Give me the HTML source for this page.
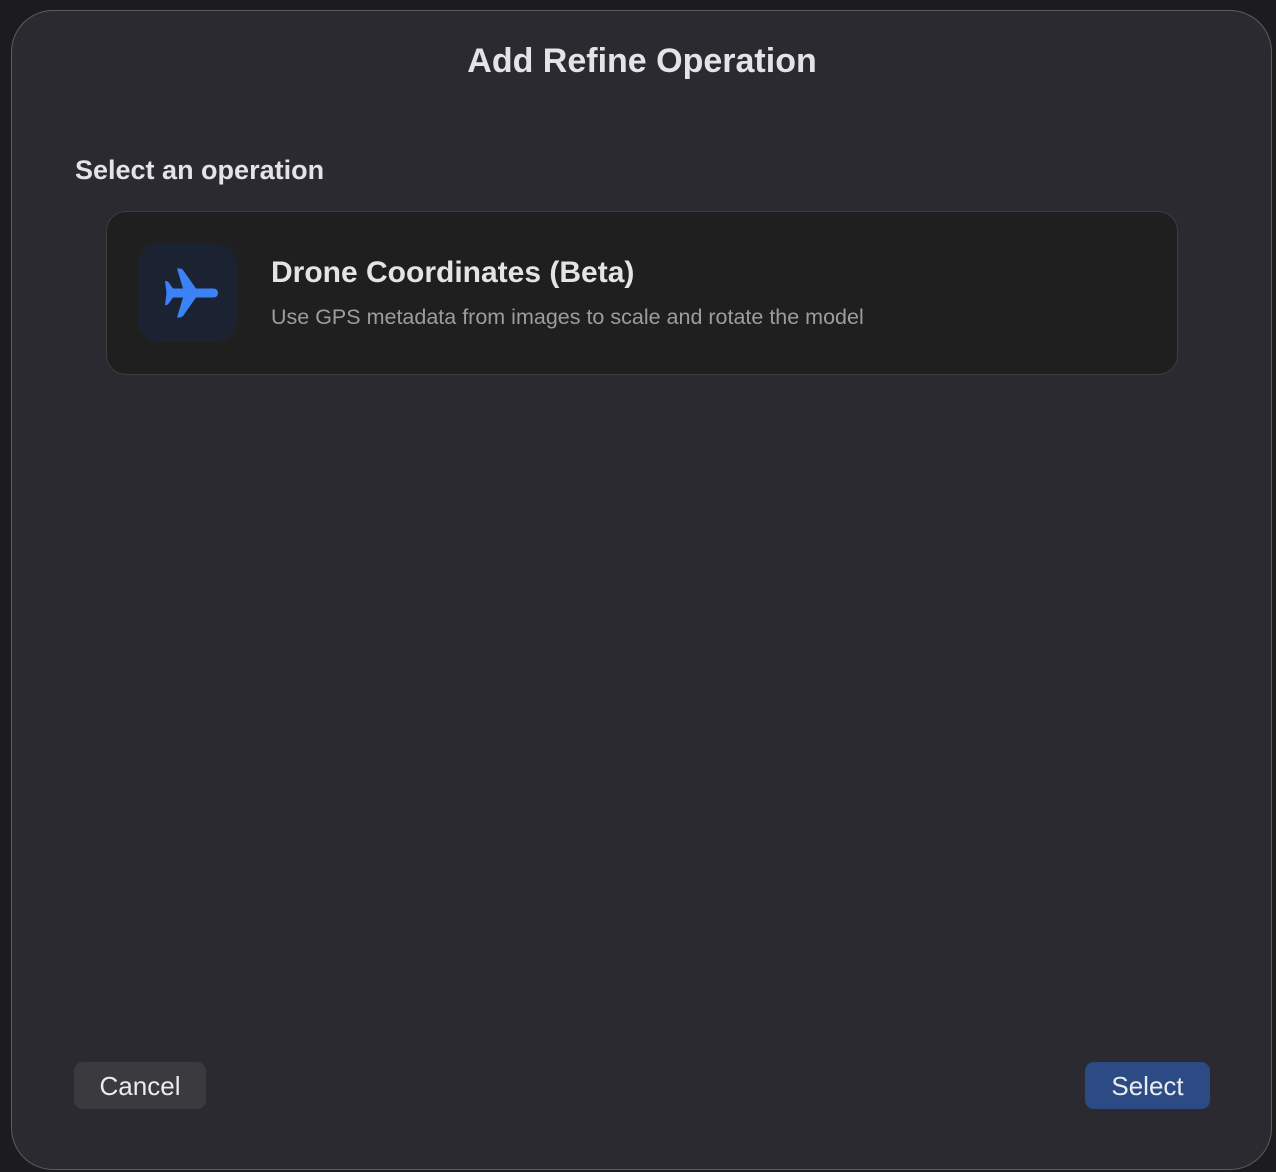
<!DOCTYPE html>
<html><head><meta charset="utf-8"><style>
html,body{margin:0;padding:0;width:1276px;height:1172px;overflow:hidden;background:#1c1c1e;font-family:"Liberation Sans",sans-serif;}
.dlg{position:absolute;left:11px;top:10px;width:1261px;height:1160px;background:#2a2a30;border:1.5px solid #5c5c60;border-radius:42px;box-sizing:border-box;}
.title{position:absolute;left:0;right:0;top:42px;text-align:center;color:#e4e4e6;font-weight:bold;font-size:34px;padding-left:8px;}
.sub{position:absolute;left:75px;top:155px;color:#e4e4e6;font-weight:bold;font-size:27px;}
.card{position:absolute;left:106px;top:211px;width:1072px;height:164px;background:#1f1f20;border:1.5px solid #3d3d40;border-radius:20px;box-sizing:border-box;}
.icon{position:absolute;left:138px;top:243px;width:99px;height:99px;background:#1b2332;border-radius:22px;}
.h{position:absolute;left:271px;top:256px;color:#e4e4e6;font-weight:bold;font-size:30px;}
.d{position:absolute;left:271px;top:305px;color:#9d9da0;font-size:21.5px;}
.btn{position:absolute;top:1062px;height:47px;border-radius:9px;color:#ececee;font-size:26px;line-height:49px;text-align:center;}
</style></head><body>
<div class="dlg"></div>
<div class="title">Add Refine Operation</div>
<div class="sub">Select an operation</div>
<div class="card"></div>
<div class="icon"><svg width="99" height="99" viewBox="0 0 99 99">
<path fill="#3b82f6" d="M75 45.5 C78.5 45.5 80 47.5 80 50 C80 52.5 78.5 54.5 75 54.5 L58 54.5 L45 73 C44 74 43 74.5 41.5 74.5 L39 74.5 L45 54.5 L35 54.5 L31 60 C30.5 61 29.5 62 28 62 L27 62 L28.5 50 L27 38 L28 38 C29.5 38 30.5 39 31 40 L35 45.5 L45 45.5 L39 25.5 L41.5 25.5 C43 25.5 44 26 45 27 L58 45.5 Z"/>
</svg></div>
<div class="h">Drone Coordinates (Beta)</div>
<div class="d">Use GPS metadata from images to scale and rotate the model</div>
<div class="btn" style="left:74px;width:132px;background:#3a3a3f;">Cancel</div>
<div class="btn" style="left:1085px;width:125px;background:#2c4b85;">Select</div>
</body></html>
